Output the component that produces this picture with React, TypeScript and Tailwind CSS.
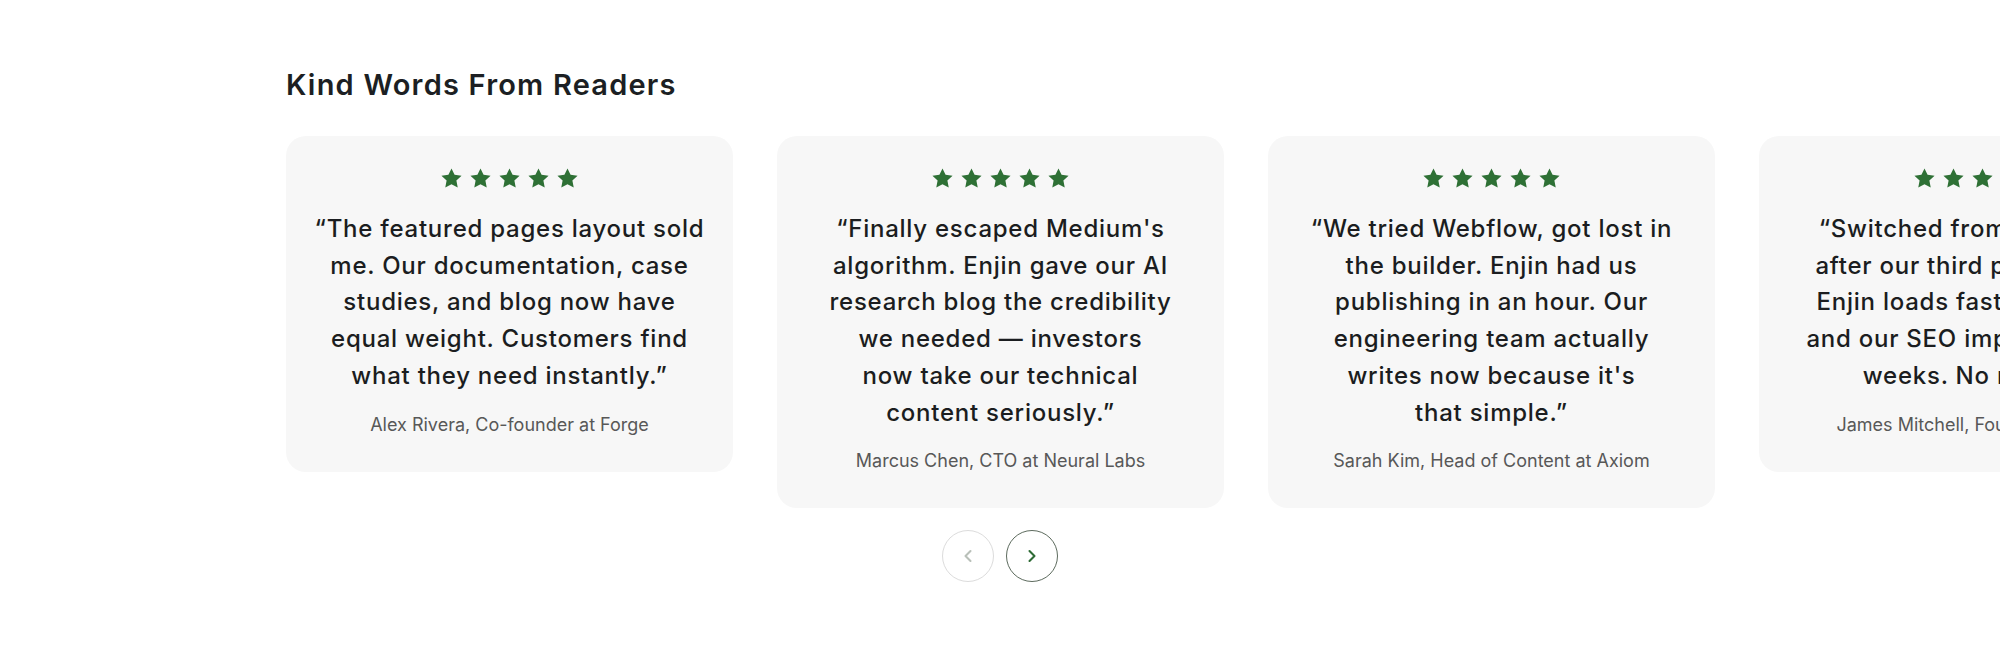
import React from 'react';
import { ChevronLeft, ChevronRight } from 'lucide-react';

type Review = {
  lines: string[];
  author: string;
};

const reviews: Review[] = [
  {
    lines: [
      '\u201cThe featured pages layout sold',
      'me. Our documentation, case',
      'studies, and blog now have',
      'equal weight. Customers find',
      'what they need instantly.\u201d',
    ],
    author: 'Alex Rivera, Co-founder at Forge',
  },
  {
    lines: [
      "\u201cFinally escaped Medium's",
      'algorithm. Enjin gave our AI',
      'research blog the credibility',
      'we needed \u2014 investors',
      'now take our technical',
      'content seriously.\u201d',
    ],
    author: 'Marcus Chen, CTO at Neural Labs',
  },
  {
    lines: [
      '\u201cWe tried Webflow, got lost in',
      'the builder. Enjin had us',
      'publishing in an hour. Our',
      'engineering team actually',
      "writes now because it's",
      'that simple.\u201d',
    ],
    author: 'Sarah Kim, Head of Content at Axiom',
  },
  {
    lines: [
      '\u201cSwitched from WordPress',
      'after our third plugin broke.',
      'Enjin loads faster than ever',
      'and our SEO improved in two',
      'weeks. No regrets.\u201d',
    ],
    author: 'James Mitchell, Founder at Lumen',
  },
];

const Star = () => (
  <svg viewBox="0 0 24 24" className="w-[23px] h-[23px]" fill="#2e7035">
    <path d="M12 1.5l3.2 6.7 7.3.9-5.4 5.1 1.4 7.3L12 18l-6.5 3.5 1.4-7.3-5.4-5.1 7.3-.9z" />
  </svg>
);

const ReviewCard: React.FC<{ review: Review }> = ({ review }) => (
  <div className="w-[447px] shrink-0 rounded-[20px] bg-[#f7f7f7] px-4 pt-[31px] pb-[33px] flex flex-col items-center text-center">
    <div className="flex items-center gap-[6px]">
      {[0, 1, 2, 3, 4].map((i) => (
        <Star key={i} />
      ))}
    </div>
    <p className="mt-[21px] text-[24px] leading-[36.7px] font-medium tracking-[0.75px] text-[#1b1d20] whitespace-nowrap">
      {review.lines.map((line, i) => (
        <React.Fragment key={i}>
          {line}
          {i < review.lines.length - 1 && <br />}
        </React.Fragment>
      ))}
    </p>
    <p className="mt-[16px] text-[18px] leading-[28px] text-[#585858] whitespace-nowrap">{review.author}</p>
  </div>
);

const App: React.FC = () => {
  return (
    <div
      className="w-full min-h-[647px] bg-white overflow-x-hidden"
      style={{ fontFamily: 'Inter, "Noto Sans", sans-serif' }}
    >
      <section className="mx-auto w-[1428px] pt-[67px]">
        <h2 className="text-[29px] leading-[36px] font-semibold text-[#1c1f23] tracking-[1.2px]">
          Kind Words From Readers
        </h2>
        <div className="mt-[33px] flex items-start gap-[44px]">
          {reviews.map((r, i) => (
            <ReviewCard key={i} review={r} />
          ))}
        </div>
        <div className="mt-[22px] flex items-center justify-center gap-[12px]">
          <button className="w-[52px] h-[52px] rounded-full border border-[#dcdcdc] flex items-center justify-center text-[#b9c0b9]">
            <ChevronLeft size={20} strokeWidth={2.5} />
          </button>
          <button className="w-[52px] h-[52px] rounded-full border border-[#5d6b5e] flex items-center justify-center text-[#2e6b35]">
            <ChevronRight size={20} strokeWidth={2.5} />
          </button>
        </div>
      </section>
    </div>
  );
};

export default App;
